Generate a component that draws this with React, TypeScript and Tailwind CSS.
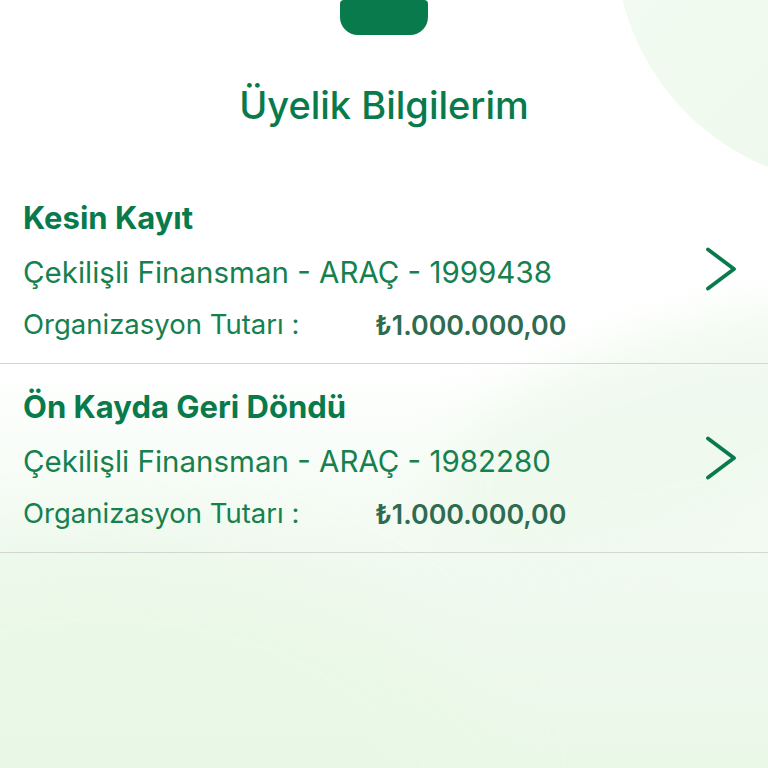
import React from 'react'

type Membership = {
  status: string
  product: string
  amount: string
}

const items: Membership[] = [
  { status: 'Kesin Kayıt', product: 'Çekilişli Finansman - ARAÇ - 1999438', amount: '₺1.000.000,00' },
  { status: 'Ön Kayda Geri Döndü', product: 'Çekilişli Finansman - ARAÇ - 1982280', amount: '₺1.000.000,00' },
]

function Chevron() {
  return (
    <svg width="32" height="44" viewBox="0 0 32 44" fill="none" className="shrink-0">
      <path d="M3 2.5 L29 22 L3 41.5" stroke="#087a4c" strokeWidth="3.8" strokeLinecap="round" strokeLinejoin="round" />
    </svg>
  )
}

function MembershipRow({ item }: { item: Membership }) {
  return (
    <div className="flex h-[189px] items-center border-b border-[#d4d6d4] pl-[23px] pr-[31px]">
      <div className="flex min-w-0 flex-1 flex-col pt-[21px] pb-[17px]">
        <div className="flex h-[44px] items-center text-[31px] font-bold text-[#087a4c]">{item.status}</div>
        <div className="flex h-[64px] items-center text-[29.5px] font-normal text-[#16804f]">{item.product}</div>
        <div className="flex h-[42px] items-center">
          <span className="w-[352px] text-[27.5px] text-[#16804f]">Organizasyon Tutarı :</span>
          <span className="text-[26.8px] font-semibold text-[#2f6b50]">{item.amount}</span>
        </div>
      </div>
      <Chevron />
    </div>
  )
}

export default function App() {
  return (
    <div className="relative h-[768px] w-[768px] overflow-hidden bg-white [font-family:Inter,'Noto_Sans',sans-serif]">
      {/* soft background waves */}
      <div className="pointer-events-none absolute left-[615px] top-[-305px] h-[490px] w-[490px] rounded-full bg-gradient-to-br from-[#f5fcf4] to-[#ebf8e9]" />
      <div className="pointer-events-none absolute left-0 top-[360px] h-[408px] w-[768px] bg-gradient-to-b from-[#ffffff]/0 via-[#f1faf0] to-[#eaf8e8]" />
      <div className="pointer-events-none absolute left-[-200px] top-[540px] h-[420px] w-[700px] rotate-[8deg] rounded-[50%] bg-[#e9f8e6] opacity-70 blur-2xl" />
      <div className="pointer-events-none absolute left-[420px] top-[330px] h-[200px] w-[520px] -rotate-[18deg] rounded-[50%] bg-[#eef9ec] opacity-80 blur-xl" />

      <div className="relative flex flex-col">
        <header className="flex h-[175px] flex-col items-center">
          <div className="h-[35px] w-[88px] rounded-b-[18px] rounded-t-[4px] bg-[#087a4c]" />
          <h1 className="mt-[46px] flex h-[48px] items-center text-[38px] font-medium text-[#087a4c]">Üyelik Bilgilerim</h1>
        </header>
        {items.map((item) => (
          <MembershipRow key={item.product} item={item} />
        ))}
      </div>
    </div>
  )
}
